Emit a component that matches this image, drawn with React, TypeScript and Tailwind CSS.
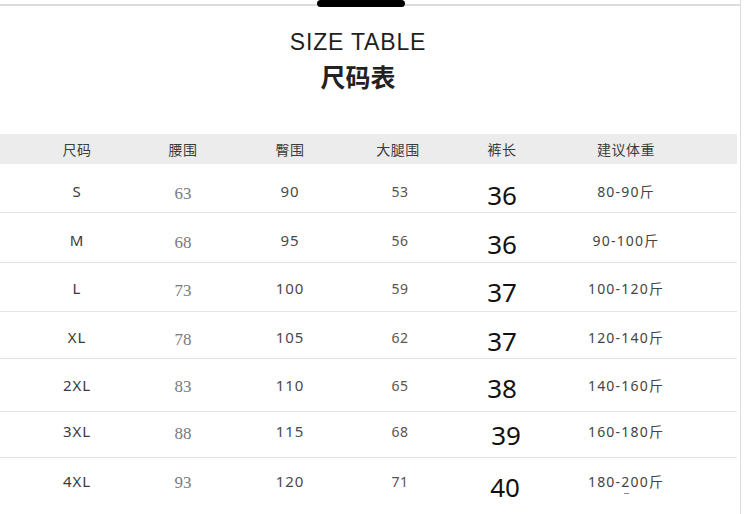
import React from "react";

const cjk = "font-['Noto_Sans','Noto_Sans_CJK_SC',sans-serif]";

const rows = [
  { size: "S", waist: "63", hip: "90", thigh: "53", len: "36", weight: "80-90斤", cls: "h-[49px] pt-[7px]", lenCls: "" },
  { size: "M", waist: "68", hip: "95", thigh: "56", len: "36", weight: "90-100斤", cls: "h-[50px] pt-[6px]", lenCls: "" },
  { size: "L", waist: "73", hip: "100", thigh: "59", len: "37", weight: "100-120斤", cls: "h-[49px] pt-[3px]", lenCls: "" },
  { size: "XL", waist: "78", hip: "105", thigh: "62", len: "37", weight: "120-140斤", cls: "h-[47px] pt-[5px]", lenCls: "" },
  { size: "2XL", waist: "83", hip: "110", thigh: "65", len: "38", weight: "140-160斤", cls: "h-[53px]", lenCls: "" },
  { size: "3XL", waist: "88", hip: "115", thigh: "68", len: "39", weight: "160-180斤", cls: "h-[46px] pb-[6px]", lenCls: "pl-[8px]" },
  { size: "4XL", waist: "93", hip: "120", thigh: "71", len: "40", weight: "180-200斤", cls: "h-[60px] pb-[14px]", lenCls: "pl-[6px] translate-y-[6px]" },
];

const headers = ["尺码", "腰围", "臀围", "大腿围", "裤长", "建议体重"];

const grid = "grid grid-cols-[24px_106px_106px_108px_108px_100px_148px_1fr] items-center";

export default function App() {
  return (
    <div className="flex w-[747px] h-[514px] overflow-hidden bg-white">
      <div className="w-[740px] flex flex-col">
        {/* top handle */}
        <div className="flex items-end h-[8px]">
          <div className="w-[317px] h-[2px] bg-[#dcdcdc] mb-[1px]" />
          <div className="w-[88px] h-[7px] bg-black rounded-full" />
          <div className="flex-1 h-[2px] bg-[#dcdcdc] mb-[1px]" />
        </div>

        {/* title */}
        <div className="flex flex-col items-center pr-[24px] pt-[24px]">
          <div className="font-['Liberation_Sans',sans-serif] text-[23px] leading-[23px] tracking-[0.8px] text-[#1f1f1f]">
            SIZE TABLE
          </div>
          <div className={`${cjk} font-bold text-[25px] leading-[25px] mt-[11px] text-[#222]`}>尺码表</div>
        </div>

        {/* table */}
        <div className="mt-[44px] w-[737px]">
          <div className={`${grid} h-[30px] bg-[#ececec]`}>
            <div />
            {headers.map((h) => (
              <div key={h} className={`${cjk} text-center text-[14px] tracking-[0.5px] text-[#3c3c3c]`}>
                {h}
              </div>
            ))}
            <div />
          </div>

          {rows.map((r, i) => (
            <div key={r.size} className={`${grid} ${r.cls} ${i < rows.length - 1 ? "border-b border-[#e4e4e4]" : ""}`}>
              <div />
              <div className="text-center font-['Noto_Sans',sans-serif] text-[15px] tracking-[1px] text-[#3a3a3a]">
                {r.size}
              </div>
              <div className="text-center font-['Liberation_Serif',serif] text-[17px] text-[#7a7a7a] translate-y-[2px]">
                {r.waist}
              </div>
              <div className="text-center font-['Noto_Sans',sans-serif] text-[15px] tracking-[1px] text-[#4a4a4a]">
                {r.hip}
              </div>
              <div className="text-center pl-[4px] font-['Noto_Sans',sans-serif] text-[14px] tracking-[0.5px] text-[#555]">
                {r.thigh}
              </div>
              <div className={`text-center font-['Noto_Sans',sans-serif] text-[26px] leading-[30px] text-[#111] translate-y-[3px] ${r.lenCls}`}>
                {r.len}
              </div>
              <div className={`relative text-center ${cjk} text-[14px] tracking-[1.2px] text-[#444]`}>
                {r.weight}
                {r.size === "4XL" && (
                  <span className="absolute left-[72px] top-[22px] w-[5px] h-[1px] bg-[#888]" />
                )}
              </div>
              <div />
            </div>
          ))}
        </div>
      </div>
      <div className="w-px bg-[#dddddd]" />
      <div className="flex-1" />
    </div>
  );
}
